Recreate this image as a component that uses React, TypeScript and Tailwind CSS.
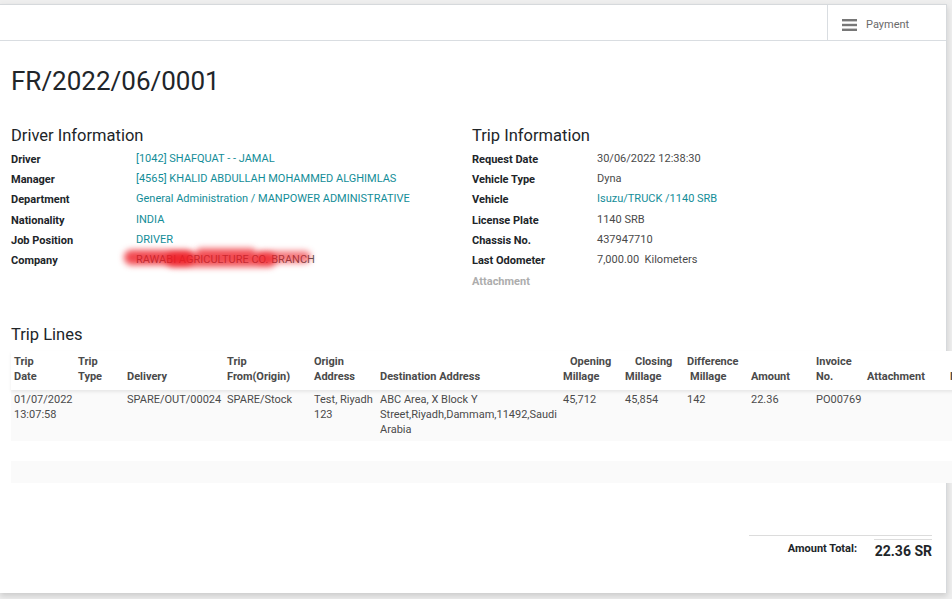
import React from 'react';

const driverRows = [
  { label: 'Driver', value: '[1042] SHAFQUAT - - JAMAL', link: true },
  { label: 'Manager', value: '[4565] KHALID ABDULLAH MOHAMMED ALGHIMLAS', link: true },
  { label: 'Department', value: 'General Administration / MANPOWER ADMINISTRATIVE', link: true },
  { label: 'Nationality', value: 'INDIA', link: true },
  { label: 'Job Position', value: 'DRIVER', link: true },
];

const tripRows = [
  { label: 'Request Date', value: '30/06/2022 12:38:30', link: false },
  { label: 'Vehicle Type', value: 'Dyna', link: false },
  { label: 'Vehicle', value: 'Isuzu/TRUCK /1140 SRB', link: true },
  { label: 'License Plate', value: '1140 SRB', link: false },
  { label: 'Chassis No.', value: '437947710', link: false },
  { label: 'Last Odometer', value: '7,000.00\u00a0 Kilometers', link: false },
];

const cols = 'grid grid-cols-[64px_49px_100px_87px_66px_183px_62px_62px_64px_65px_51px_83px_40px]';

const Field = ({ label, value, link }: { label: string; value: string; link: boolean }) => (
  <div className="flex h-[20.3px] items-center">
    <div className="w-[125px] shrink-0 text-[11px] font-bold text-[#212529] pt-[2px]">{label}</div>
    <div className={`text-[11px] ${link ? 'text-[#138d98]' : 'text-[#4a4a4a]'}`}>{value}</div>
  </div>
);

export default function App() {
  return (
    <div className="w-[952px] h-[599px] bg-[#eeeeee] overflow-hidden font-['Roboto',sans-serif] pt-[4px]">
      <div className="w-[947px] h-[589px] bg-white border-t border-r border-[#d6d9dc] shadow-[0_3px_6px_rgba(0,0,0,0.15)]">
        {/* control bar */}
        <div className="h-[36px] flex justify-end border-b border-[#d9dde1]">
          <div className="w-[119px] border-l border-[#d9dde1] flex items-center pl-[14px] pt-[5px] gap-[9px]">
            <svg width="15" height="12" viewBox="0 0 15 12" className="-mt-[1px]">
              <rect x="0" y="0" width="15" height="2.4" fill="#777" />
              <rect x="0" y="4.8" width="15" height="2.4" fill="#777" />
              <rect x="0" y="9.6" width="15" height="2.4" fill="#777" />
            </svg>
            <span className="text-[11px] text-[#6a6a6a]">Payment</span>
          </div>
        </div>

        <div className="px-[11px]">
          <h1 className="text-[26px] leading-[30px] text-[#212529] pt-[25px]">FR/2022/06/0001</h1>

          <div className="grid grid-cols-[461px_1fr] mt-[29px]">
            <div>
              <h2 className="text-[16.5px] leading-[22px] text-[#212529] mb-[2px]">Driver Information</h2>
              {driverRows.map(r => <Field key={r.label} {...r} />)}
              <div className="flex h-[20.3px] items-center">
                <div className="w-[125px] shrink-0 text-[11px] font-bold text-[#212529] pt-[2px]">Company</div>
                <div className="relative text-[11px] text-[#555]">
                  RAWABI AGRICULTURE CO. BRANCH
                  <span className="absolute left-[-12px] top-[-2px] w-[70px] h-[15px] rounded-full bg-[#ee1c24]/80 blur-[3px]" />
                  <span className="absolute left-[30px] top-[1px] w-[110px] h-[14px] rounded-full bg-[#ee1c24]/75 blur-[3px]" />
                  <span className="absolute left-[60px] top-[-4px] w-[60px] h-[10px] rounded-full bg-[#ee1c24]/60 blur-[3px]" />
                  <span className="absolute left-[120px] top-[-1px] w-[55px] h-[12px] rounded-full bg-[#ee1c24]/60 blur-[3px]" />
                </div>
              </div>
            </div>
            <div>
              <h2 className="text-[16.5px] leading-[22px] text-[#212529] mb-[2px]">Trip Information</h2>
              {tripRows.map(r => <Field key={r.label} {...r} />)}
              <div className="flex h-[20.3px] items-center">
                <div className="text-[11px] font-bold text-[#adadad] pt-[2px]">Attachment</div>
              </div>
            </div>
          </div>

          <h2 className="text-[16.5px] leading-[22px] text-[#212529] mt-[33px]">Trip Lines</h2>

          <div className="w-[960px] mt-[5px] text-[11px] leading-[15px]">
            <div className={`${cols} bg-white pt-[3px] pb-[6px] font-bold text-[#4a4a4a] shadow-[0_2px_3px_rgba(0,0,0,0.08)] relative`}>
              <div className="px-[3px]">Trip<br />Date</div>
              <div className="px-[3px]">Trip<br />Type</div>
              <div className="px-[3px] pt-[15px]">Delivery</div>
              <div className="px-[3px]">Trip<br />From(Origin)</div>
              <div className="px-[3px]">Origin<br />Address</div>
              <div className="px-[3px] pt-[15px]">Destination Address</div>
              <div className="px-[3px]"><span className="pl-[7px]">Opening</span><br />Millage</div>
              <div className="px-[3px]"><span className="pl-[10px]">Closing</span><br />Millage</div>
              <div className="px-[3px]">Difference<br /><span className="pl-[3px]">Millage</span></div>
              <div className="px-[3px] pt-[15px]">Amount</div>
              <div className="px-[3px]">Invoice<br />No.</div>
              <div className="px-[3px] pt-[15px]">Attachment</div>
              <div className="px-[3px] pt-[15px]">Note</div>
            </div>
            <div className={`${cols} bg-[#fafafa] pt-[2px] h-[51px] text-[#4a4a4a]`}>
              <div className="px-[3px]">01/07/2022<br />13:07:58</div>
              <div className="px-[3px]"></div>
              <div className="px-[3px] whitespace-nowrap">SPARE/OUT/00024</div>
              <div className="px-[3px]">SPARE/Stock</div>
              <div className="px-[3px]">Test, Riyadh<br />123</div>
              <div className="px-[3px]">ABC Area, X Block Y Street,Riyadh,Dammam,11492,Saudi Arabia</div>
              <div className="px-[3px]">45,712</div>
              <div className="px-[3px]">45,854</div>
              <div className="px-[3px]">142</div>
              <div className="px-[3px]">22.36</div>
              <div className="px-[3px]">PO00769</div>
              <div className="px-[3px]"></div>
              <div className="px-[3px]"></div>
            </div>
            <div className="h-[20px] bg-white" />
            <div className="h-[22px] bg-[#fafafa]" />
          </div>

          <div className="flex justify-end mt-[52px] pr-[3px]">
            <div className="w-[183px] border-t border-[#dcdcdc] flex justify-end items-start pt-[3px]">
              <div className="text-[11px] font-bold text-[#212529] mt-[2px] mr-[17px]">Amount Total:</div>
              <div className="w-[58px] border-t border-[#dcdcdc] text-[14px] font-bold text-[#212529] pt-[1px] text-right">22.36 SR</div>
            </div>
          </div>
        </div>
      </div>
    </div>
  );
}
